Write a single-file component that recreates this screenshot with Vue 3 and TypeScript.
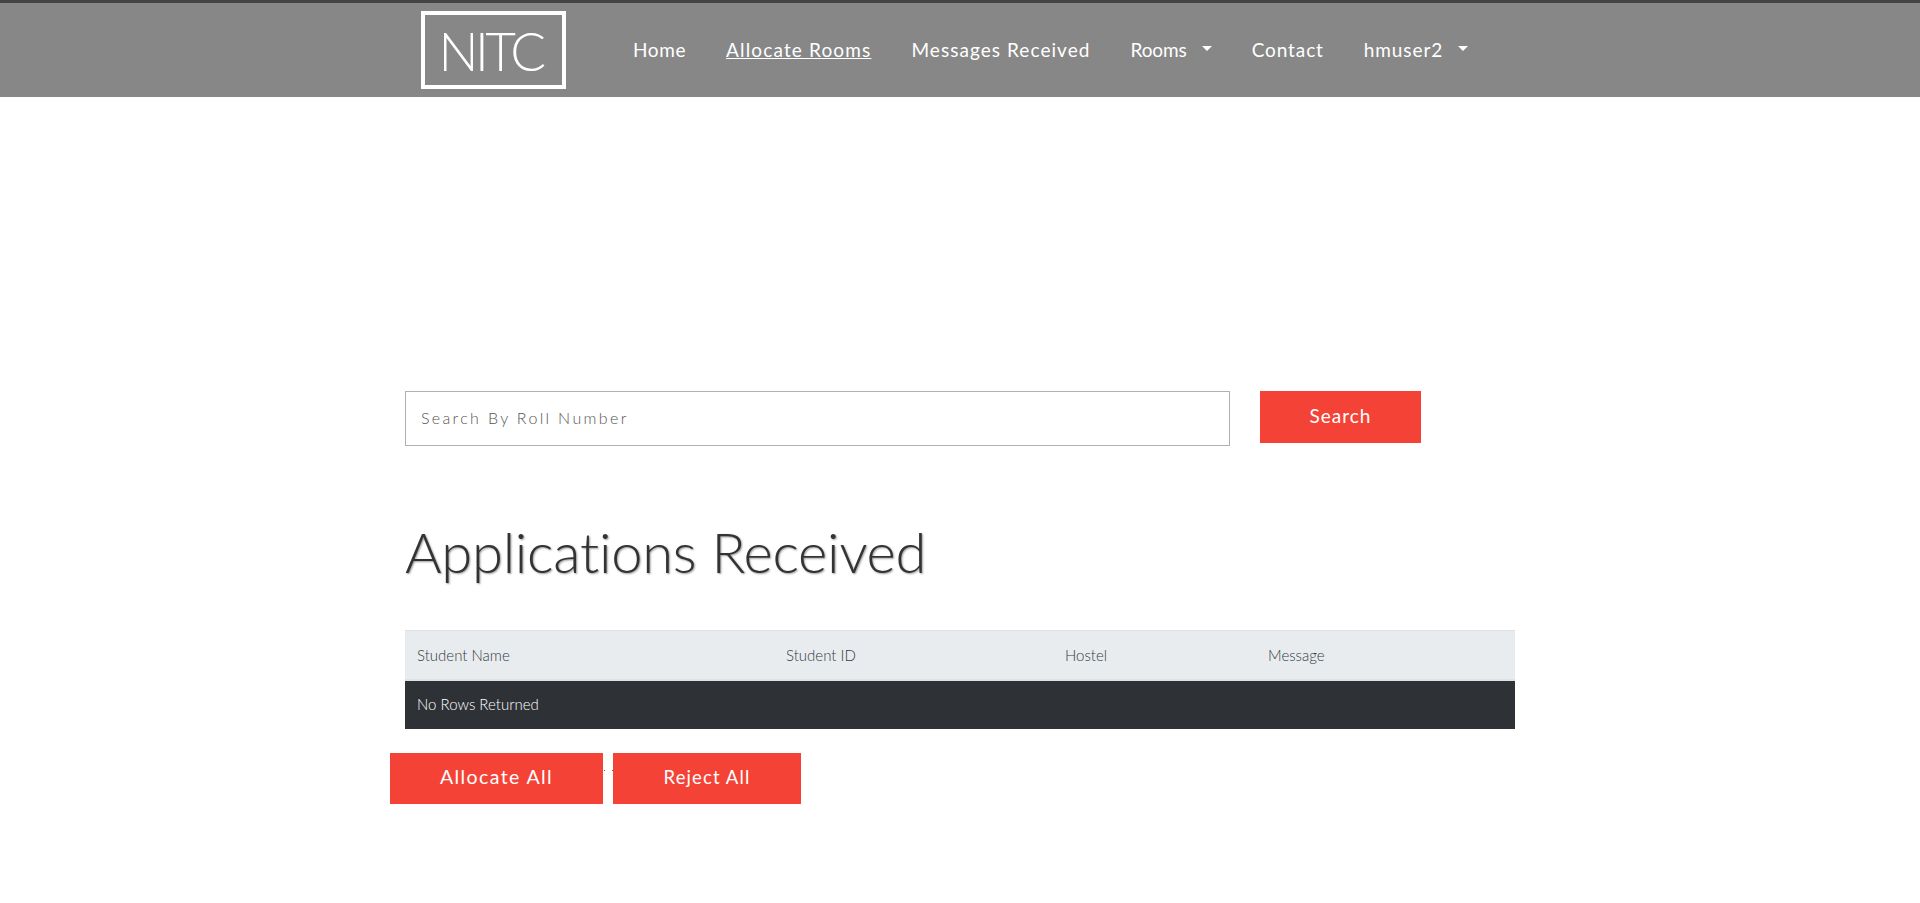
<template>
  <div class="page">
    <header class="topbar">
      <div class="topbar__inner">
        <a class="logo" href="#">NITC</a>
        <nav class="nav">
          <a v-for="link in links" :key="link.label" class="nav__link" :class="{ active: link.active }" href="#">
            <span>{{ link.label }}</span>
            <i v-if="link.caret" class="caret" aria-hidden="true" />
          </a>
        </nav>
      </div>
    </header>

    <main class="content">
      <form class="search" @submit.prevent>
        <input class="search__input" type="text" placeholder="Search By Roll Number" />
        <button class="btn search__btn" type="submit">Search</button>
      </form>

      <h1 class="title">Applications Received</h1>

      <table class="rooms">
        <thead>
          <tr>
            <th v-for="col in columns" :key="col.label" :style="{ width: col.width + 'px' }">{{ col.label }}</th>
          </tr>
        </thead>
        <tbody>
          <tr>
            <td colspan="4">No Rows Returned</td>
          </tr>
        </tbody>
      </table>

      <div class="actions">
        <button class="btn actions__allocate" type="button">Allocate All</button>
        <i class="actions__gap" aria-hidden="true" />
        <button class="btn actions__reject" type="button">Reject All</button>
      </div>
    </main>
  </div>
</template>

<script setup lang="ts">
type NavLink = {
  label: string;
  active?: boolean;
  caret?: boolean;
};

const links: NavLink[] = [
  { label: 'Home' },
  { label: 'Allocate Rooms', active: true },
  { label: 'Messages Received' },
  { label: 'Rooms', caret: true },
  { label: 'Contact' },
  { label: 'hmuser2', caret: true },
];

const columns = [
  { label: 'Student Name', width: 369 },
  { label: 'Student ID', width: 279 },
  { label: 'Hostel', width: 203 },
  { label: 'Message', width: 259 },
];
</script>

<style>
html,
body {
  margin: 0;
  background: #fff;
}
</style>

<style scoped>
.page {
  min-height: 903px;
  font-family: Lato, "Open Sans", sans-serif;
  color: #333;
}

.topbar {
  height: 94px;
  background: #878787;
  border-top: 3px solid #444;
}

.topbar__inner {
  width: 1140px;
  margin: 0 auto;
  display: flex;
  align-items: flex-start;
  padding-left: 31px;
  box-sizing: border-box;
}

.logo {
  width: 145px;
  height: 78px;
  margin-top: 8px;
  padding-right: 6px;
  border: 4px solid #fff;
  box-sizing: border-box;
  display: flex;
  align-items: center;
  justify-content: center;
  color: #fff;
  font-size: 53px;
  font-weight: 300;
  letter-spacing: -3.5px;
  text-decoration: none;
}

.nav {
  display: flex;
  margin-left: 47px;
  margin-top: 32px;
}

.nav__link {
  display: flex;
  align-items: center;
  padding: 0 20px;
  color: #fff;
  font-size: 19px;
  line-height: 30px;
  letter-spacing: 0.9px;
  text-decoration: none;
}

/* the original nav face is narrower on some words, tuned per link */
.nav__link:nth-child(1) {
  letter-spacing: 0.6px;
}

.nav__link:nth-child(2) {
  letter-spacing: 1.15px;
}

.nav__link:nth-child(3) {
  letter-spacing: 1.05px;
}

.nav__link:nth-child(4) {
  letter-spacing: -0.1px;
}

.nav__link.active span {
  text-decoration: underline;
}

.caret {
  width: 0;
  height: 0;
  margin-left: 15px;
  margin-bottom: 3px;
  border-top: 5px solid #fff;
  border-left: 5px solid transparent;
  border-right: 5px solid transparent;
}

.content {
  width: 1140px;
  margin: 0 auto;
  padding-top: 294px;
}

.search {
  display: flex;
  align-items: flex-start;
  padding-left: 15px;
}

.search__input {
  appearance: none;
  width: 825px;
  height: 55px;
  padding: 0 15px 2px;
  border: 1px solid #b0b0b0;
  border-radius: 0;
  box-sizing: border-box;
  font-family: inherit;
  font-size: 16px;
  font-weight: 300;
  letter-spacing: 2.35px;
  outline: 0;
}

.search__input::placeholder {
  color: #555;
}

.btn {
  height: 52px;
  border: 0;
  padding: 0 0 3px;
  background: #f44336;
  color: #fff;
  font-family: inherit;
  font-size: 19px;
  letter-spacing: 1px;
  cursor: pointer;
}

.search__btn {
  width: 161px;
  margin-left: 30px;
}

.title {
  margin: 72px 0 44px 15px;
  font-size: 56px;
  line-height: 68px;
  font-weight: 300;
  letter-spacing: -0.2px;
  color: #333;
  text-shadow: 1px 1px 2px rgba(0, 0, 0, 0.4);
}

.rooms {
  width: 1110px;
  margin-left: 15px;
  border-collapse: collapse;
  table-layout: fixed;
  font-size: 15px;
}

.rooms th {
  height: 49px;
  padding: 0 12px;
  box-sizing: border-box;
  background: #e9ecef;
  border-top: 1px solid #dee2e6;
  border-bottom: 2px solid #dee2e6;
  color: #343a40;
  font-weight: 300;
  text-align: left;
}

.rooms td {
  height: 49px;
  padding: 0 12px 2px;
  box-sizing: border-box;
  background: #2e3136;
  color: #fff;
  font-weight: 300;
}

.actions {
  display: flex;
  align-items: flex-start;
  margin-top: 24px;
}

.actions .btn {
  height: 51px;
}

.actions__allocate {
  width: 213px;
  font-size: 19.5px;
  letter-spacing: 1.4px;
}

.actions__gap {
  width: 10px;
  height: 1px;
  margin-top: 17px;
  background: repeating-linear-gradient(90deg, transparent 0 1px, #7a5fa0 1px 2px, transparent 2px 8px);
}

.actions__reject {
  width: 188px;
  font-size: 18.5px;
  letter-spacing: 1.1px;
}
</style>
